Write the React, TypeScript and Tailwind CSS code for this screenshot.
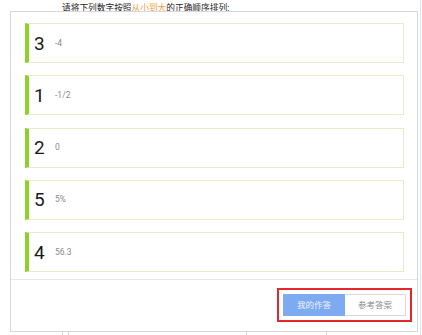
import React from "react";

const ITEMS = [
  { no: "3", value: "-4" },
  { no: "1", value: "-1/2" },
  { no: "2", value: "0" },
  { no: "5", value: "5%" },
  { no: "4", value: "56.3" },
];

const cjk = "font-['Liberation_Sans','Noto_Sans_CJK_SC',sans-serif]";

export default function App() {
  return (
    <div className={`relative w-[422px] h-[335px] bg-white overflow-hidden ${cjk}`}>
      {/* page edge on the right */}
      <div className="absolute right-[1px] top-0 h-full w-px bg-[#dfe5ee]" />

      {/* question stem, mostly covered by the dialog */}
      <div className="h-[11px] pl-[62px] pt-[3px] text-[8.7px] leading-[10px] text-[#222]">
        请将下列数字按照<span className="text-[#f0a040]">从小到大</span>的正确顺序排列:
      </div>

      {/* dialog */}
      <div className="relative z-10 ml-[10px] w-[408px] h-[321px] bg-white border border-[#d6d9dc] flex flex-col">
        <div className="flex flex-col gap-[12.25px] pt-[11px] pl-[14px] pr-[13px]">
          {ITEMS.map((item) => (
            <div
              key={item.no}
              className="h-[40px] flex items-center border border-[#e6ecc9] border-l-[4px] border-l-[#8fd12a] pl-[5px]"
            >
              <span className="w-[21px] text-[19px] leading-none text-[#1a1a1a] font-['Roboto',sans-serif]">
                {item.no}
              </span>
              <span className="text-[8.5px] text-[#8a8a8a] font-['Roboto',sans-serif]">{item.value}</span>
            </div>
          ))}
        </div>

        <div className="mt-[7px] flex-1 border-t border-[#e3e6ea] flex justify-end items-start pt-[8px] pr-[5px]">
          <div className="border-2 border-[#e5272b] px-[4px] py-[4px] flex">
            <button className="w-[62px] h-[22px] bg-[#7eaaf2] text-[8.5px] text-[#eef4ff]">我的作答</button>
            <button className="w-[61px] h-[22px] bg-white border border-[#d9d9d9] border-l-0 text-[8.5px] text-[#8a8a8a]">
              参考答案
            </button>
          </div>
        </div>
      </div>

      {/* table lines behind the dialog */}
      <div className="absolute left-[62px] top-[332px] h-[3px] w-px bg-[#cfd3d8]" />
      <div className="absolute left-[68px] top-[332px] h-[3px] w-px bg-[#cfd3d8]" />
      <div className="absolute left-[246px] top-[332px] h-[3px] w-px bg-[#cfd3d8]" />
      <div className="absolute left-[326px] top-[332px] h-[3px] w-px bg-[#cfd3d8]" />
    </div>
  );
}
